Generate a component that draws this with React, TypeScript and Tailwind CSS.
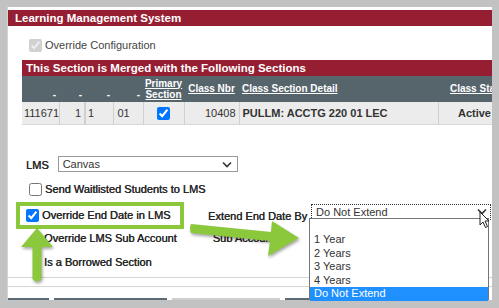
import React from 'react';

const font = { fontFamily: '"Liberation Sans", Arial, sans-serif' };

function Chevron() {
  return (
    <svg width="10" height="7" viewBox="0 0 10 7" className="shrink-0">
      <path d="M1 1.5 L5 5.5 L9 1.5" fill="none" stroke="#333" strokeWidth="1.6" />
    </svg>
  );
}

function Arrows() {
  return (
    <svg
      width="499"
      height="308"
      viewBox="0 0 499 308"
      className="absolute left-0 top-0 pointer-events-none"
      style={{ filter: 'drop-shadow(1px 2px 1.5px rgba(0,0,0,0.35))' }}
    >
      {/* up arrow */}
      <path
        d="M37 228 L53 247 L41.5 247 L41.5 279 Q37 284 32.5 279 L32.5 247 L21 247 Z"
        fill="#8cc83c"
      />
      {/* right arrow */}
      <path
        d="M191 224 Q189 228 191 233 L270 241 L268 256 L299 238 L272 221 L271 232 Z"
        fill="#8cc83c"
      />
    </svg>
  );
}

const heavy = 'text-[#262626] [text-shadow:0.35px_0_0_#262626]';

export default function App() {
  const cols = [37, 26, 28, 30, 41, 55, 199, 54];

  return (
    <div className="relative w-[499px] h-[308px] overflow-hidden bg-[#c2c2c2]" style={font}>
      <div className="absolute left-[7px] top-[7px] w-[485px] h-[293px] overflow-hidden bg-white border-l border-[#d4d4d4] flex flex-col">
        {/* title */}
        <div className="mt-[3px] h-[16px] bg-[#961e32] text-white font-bold text-[11.5px] leading-[16px] pl-[7px]">
          Learning Management System
        </div>

        <label className="mt-[11px] ml-[21px] flex items-center gap-[3px] text-[11px] text-[#444]">
          <input type="checkbox" checked disabled readOnly className="m-0 w-[13px] h-[13px]" />
          Override Configuration
        </label>

        {/* merged sections */}
        <div className="mt-[6px] ml-[14px] flex flex-col">
          <div className="h-[16px] bg-[#961e32] text-white font-bold text-[11.5px] leading-[16px] pl-[4px]">
            This Section is Merged with the Following Sections
          </div>
          <table className="border-collapse table-fixed text-[11px] text-[#333]" style={{ width: 470 }}>
            <colgroup>
              {cols.map((w, i) => (
                <col key={i} style={{ width: w }} />
              ))}
            </colgroup>
            <thead>
              <tr className="h-[26px] bg-[#56646c] text-white font-bold text-[10px] leading-[11px]">
                <th className="text-right align-bottom pb-[2px] pr-[3px]">-</th>
                <th className="text-right align-bottom pb-[2px] pr-[3px]">-</th>
                <th className="text-right align-bottom pb-[2px] pr-[3px]">-</th>
                <th className="text-right align-bottom pb-[2px] pr-[3px]">-</th>
                <th className="text-center underline">
                  Primary
                  <br />
                  Section
                </th>
                <th className="text-center underline whitespace-nowrap">Class Nbr</th>
                <th className="text-left pl-[3px] underline whitespace-nowrap">Class Section Detail</th>
                <th className="text-left pl-[12px] underline whitespace-nowrap overflow-hidden">Class Status</th>
              </tr>
            </thead>
            <tbody>
              <tr className="h-[23px] bg-[#ececec] border-b border-[#d8d8d8]">
                <td className="pl-[2px] border-r border-[#d0d0d0]">111671</td>
                <td className="text-right pr-[3px] border-r-2 border-[#d0d0d0]">1</td>
                <td className="pl-[2px] border-r border-[#d0d0d0]">1</td>
                <td className="pl-[4px] border-r border-[#d0d0d0]">01</td>
                <td className="text-center border-r border-[#d0d0d0]">
                  <input type="checkbox" checked readOnly className="m-0 w-[13px] h-[13px] align-middle" />
                </td>
                <td className="text-right pr-[3px] border-r border-[#d0d0d0]">10408</td>
                <td className="pl-[3px] font-bold border-r border-[#d0d0d0] whitespace-nowrap">
                  PULLM: ACCTG 220 01 LEC
                </td>
                <td className="text-right pr-[1px] font-bold whitespace-nowrap overflow-hidden">Active</td>
              </tr>
            </tbody>
          </table>
        </div>

        {/* LMS select */}
        <div className="mt-[31px] ml-[18px] flex items-end gap-[9px] text-[11px]">
          <span className={`leading-[11px] mb-[1px] ${heavy}`}>LMS</span>
          <div className="w-[180px] h-[16px] border border-[#9a9a9a] flex items-center justify-between pl-[4px] pr-[5px] text-[#333]">
            <span className="leading-[14px]">Canvas</span>
            <Chevron />
          </div>
        </div>

        <label className={`mt-[9px] ml-[21px] flex items-center gap-[3px] text-[11px] ${heavy}`}>
          <input type="checkbox" readOnly className="m-0 w-[13px] h-[13px]" />
          Send Waitlisted Students to LMS
        </label>

        {/* override end date row */}
        <div className="mt-[4px] flex items-start whitespace-nowrap">
          <div
            className={`shrink-0 ml-[8px] w-[168px] h-[27px] border-[4px] border-[#8cc83c] flex items-center pl-[6px] gap-[3px] text-[11px] ${heavy}`}
          >
            <input type="checkbox" checked readOnly className="m-0 w-[13px] h-[13px]" />
            Override End Date in LMS
          </div>
          <span className={`ml-[24px] mt-[6px] text-[11px] ${heavy}`}>Extend End Date By</span>
          <div className="shrink-0 ml-[4px] mt-[2px] w-[180px] h-[16px] border border-dotted border-[#333] flex items-center justify-between pl-[4px] pr-[3px] text-[11px] text-[#333]">
            <span className="leading-[14px]">Do Not Extend</span>
            <Chevron />
          </div>
        </div>

        <div className={`mt-[3px] flex items-center h-[14px] text-[11px] whitespace-nowrap ${heavy}`}>
          <span className="ml-[36px]">Override LMS Sub Account</span>
          <span className="ml-[36px]">Sub Account</span>
        </div>

        <div className={`mt-[8px] ml-[36px] h-[14px] text-[11px] ${heavy}`}>Is a Borrowed Section</div>

        <div className="mt-[9px] border-t border-[#d6d6d6]" />
        <div className="mt-[8px] border-t border-[#d6d6d6]" />

        <div className="mt-[11px] flex gap-[5px] h-[4px]">
          <div className="w-[41px] bg-[#5d6a73]" />
          <div className="w-[113px] bg-[#5d6a73]" />
          <div className="w-[108px] bg-[#e6e6e6] border border-[#cfcfcf]" />
          <div className="w-[40px] bg-[#5d6a73]" />
        </div>
      </div>

      {/* open dropdown list */}
      <div className="absolute left-[309px] top-[218px] w-[180px] h-[82px] bg-white border border-[#767676] text-[11px] text-[#333] flex flex-col pt-[14px]">
        <div className="h-[13.5px] leading-[13.5px] pl-[4px]">1 Year</div>
        <div className="h-[13.5px] leading-[13.5px] pl-[4px]">2 Years</div>
        <div className="h-[13.5px] leading-[13.5px] pl-[4px]">3 Years</div>
        <div className="h-[13.5px] leading-[13.5px] pl-[4px]">4 Years</div>
        <div className="h-[13.5px] leading-[13.5px] pl-[4px] bg-[#1e90ff] text-white">Do Not Extend</div>
      </div>

      <Arrows />

      {/* cursor */}
      <svg width="12" height="18" viewBox="0 0 12 18" className="absolute left-[479px] top-[211px]">
        <path d="M1 1 L1 14 L4 11 L6.5 16.5 L8.5 15.5 L6 10 L10 10 Z" fill="white" stroke="#222" strokeWidth="1" />
      </svg>
    </div>
  );
}
